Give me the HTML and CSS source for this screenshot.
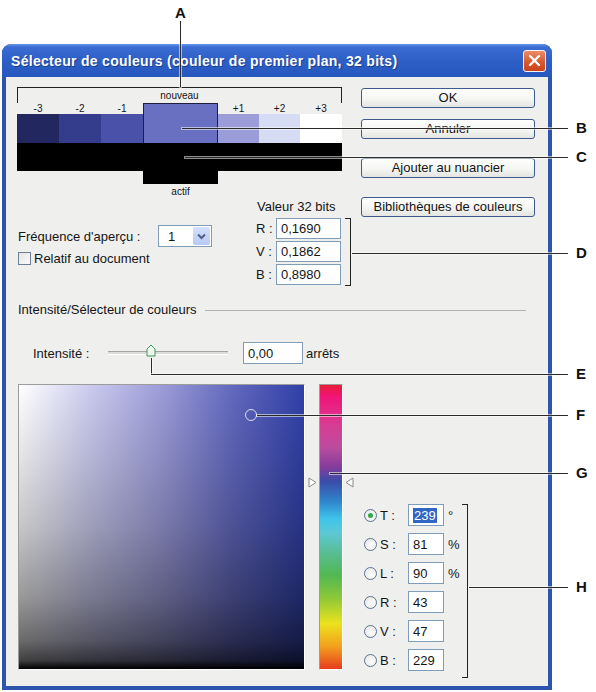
FILE: index.html
```html
<!DOCTYPE html>
<html>

<head>
	<meta charset="utf-8">
	<title>Sélecteur de couleurs</title>
	<link rel="stylesheet" href="styles.css">
</head>

<body>
	<div class="page">
		<div class="window">
			<div class="titlebar">
				<span class="title">Sélecteur de couleurs (couleur de premier plan, 32 bits)</span>
				<span class="close-btn">
					<svg width="13" height="13" viewBox="0 0 13 13"><path d="M2 2 L11 11 M11 2 L2 11" stroke="#fff" stroke-width="2.4" stroke-linecap="round"/></svg>
				</span>
			</div>

			<div class="client">
				<div class="top">
					<div class="left-col">
						<!-- new / active swatches -->
						<div class="swatch-panel">
							<div class="bracket">nouveau</div>
							<div class="swatches">
								<span class="step c1">-3</span>
								<span class="step c2">-2</span>
								<span class="step c3">-1</span>
								<span class="step c5">+1</span>
								<span class="step c6">+2</span>
								<span class="step c7">+3</span>

								<span class="new-swatch"></span>
								<span class="sw c1 m3"></span>
								<span class="sw c2 m2"></span>
								<span class="sw c3 m1"></span>
								<span class="sw c5 p1"></span>
								<span class="sw c6 p2"></span>
								<span class="sw c7 p3"></span>

								<span class="active-row"></span>
								<span class="active-ext"></span>
								<span class="active-label">actif</span>
							</div>
						</div>

						<div class="settings">
							<div class="freq">
								<div class="freq-row">
									<span class="freq-label">Fréquence d'aperçu :</span>
									<span class="select">
										<span class="select-value">1</span>
										<span class="select-arrow">
											<svg width="9" height="7" viewBox="0 0 9 7"><path d="M1 1.5 L4.5 5 L8 1.5" fill="none" stroke="#4d6185" stroke-width="2"/></svg>
										</span>
									</span>
								</div>
								<div class="check-row">
									<span class="checkbox"></span>
									<span>Relatif au document</span>
								</div>
							</div>

							<div class="values">
								<div class="values-title">Valeur 32 bits</div>
								<div class="values-body">
									<div class="values-grid">
										<span class="vlabel">R :</span><span class="box">0,1690</span>
										<span class="vlabel">V :</span><span class="box">0,1862</span>
										<span class="vlabel">B :</span><span class="box">0,8980</span>
									</div>
									<div class="bracket-d"></div>
								</div>
							</div>
						</div>
					</div>

					<div class="buttons">
						<div class="btn">OK</div>
						<div class="btn btn-cancel">Annuler</div>
						<div class="btn btn-gap">Ajouter au nuancier</div>
						<div class="btn btn-gap">Bibliothèques de couleurs</div>
					</div>
				</div>

				<div class="section-head">Intensité/Sélecteur de couleurs</div>

				<div class="intensity">
					<span class="int-label">Intensité :</span>
					<span class="track">
						<svg class="thumb" width="10" height="13" viewBox="0 0 10 13"><path d="M1 5 L5 1 L9 5 L9 12 L1 12 Z" fill="#eef6ee" stroke="#3c9a4c" stroke-width="1"/></svg>
					</span>
					<span class="box num-box">0,00</span>
					<span class="unit-text">arrêts</span>
				</div>

				<div class="picker">
					<div class="field">
						<span class="marker"></span>
					</div>
					<div class="hue-wrap">
						<svg class="tri tri-left" width="9" height="11" viewBox="0 0 9 11"><path d="M1 1 L8 5.5 L1 10 Z" fill="#fff" stroke="#8a8a8a"/></svg>
						<div class="hue-bar"></div>
						<svg class="tri tri-right" width="9" height="11" viewBox="0 0 9 11"><path d="M8 1 L1 5.5 L8 10 Z" fill="#fff" stroke="#8a8a8a"/></svg>
					</div>
					<div class="hsb">
						<div class="hsb-rows">
							<div class="hsb-row"><span class="radio on"></span><span class="hlabel">T :</span><span class="box hbox"><span class="sel">239</span></span><span class="hunit">°</span></div>
							<div class="hsb-row"><span class="radio"></span><span class="hlabel">S :</span><span class="box hbox">81</span><span class="hunit">%</span></div>
							<div class="hsb-row"><span class="radio"></span><span class="hlabel">L :</span><span class="box hbox">90</span><span class="hunit">%</span></div>
							<div class="hsb-row rgb-first"><span class="radio"></span><span class="hlabel">R :</span><span class="box hbox">43</span><span class="hunit"></span></div>
							<div class="hsb-row"><span class="radio"></span><span class="hlabel">V :</span><span class="box hbox">47</span><span class="hunit"></span></div>
							<div class="hsb-row"><span class="radio"></span><span class="hlabel">B :</span><span class="box hbox">229</span><span class="hunit"></span></div>
						</div>
						<div class="bracket-h"></div>
					</div>
				</div>
			</div>
		</div>

		<!-- callout lines and letters -->
		<span class="callout line-a"></span>
		<span class="callout line-b"></span>
		<span class="callout line-c"></span>
		<span class="callout line-d"></span>
		<span class="callout line-e1"></span>
		<span class="callout line-e2"></span>
		<span class="callout line-f"></span>
		<span class="callout line-g"></span>
		<span class="callout line-h"></span>

		<span class="tag tag-a">A</span>
		<span class="tag tag-b">B</span>
		<span class="tag tag-c">C</span>
		<span class="tag tag-d">D</span>
		<span class="tag tag-e">E</span>
		<span class="tag tag-f">F</span>
		<span class="tag tag-g">G</span>
		<span class="tag tag-h">H</span>
	</div>
</body>

</html>
```

FILE: styles.css
```css
body {
    margin: 0;
    background: #fff;
    font-family: "Liberation Sans", Arial, sans-serif;
    font-size: 13px;
    color: #151515;
}

.page {
    position: relative;
    width: 596px;
    height: 692px;
    overflow: hidden;
}

/* window frame */
.window {
    margin: 44px 0 0 2px;
    width: 550px;
    height: 646px;
    background: #2d55ad;
    border-radius: 9px 9px 0 0;
    display: flex;
    flex-direction: column;
}

.titlebar {
    flex: none;
    height: 33px;
    display: flex;
    align-items: center;
    padding: 0 6px 0 9px;
    border-radius: 9px 9px 0 0;
    background: linear-gradient(#6a96ea 0, #3a6cd2 3px, #2d5fc8 50%, #2657bf 100%);
}

.title {
    color: #fff;
    font-weight: bold;
    font-size: 14px;
    letter-spacing: 0.3px;
    text-shadow: 1px 1px 0 #1b3f8e;
}

.close-btn {
    margin-left: auto;
    width: 21px;
    height: 20px;
    border: 1px solid #f4f4f4;
    border-radius: 3px;
    background: linear-gradient(#ee8c68, #d9592f 55%, #c9431d);
    display: flex;
    align-items: center;
    justify-content: center;
}

.client {
    flex: 1;
    margin: 0 4px 4px;
    padding: 10px 13px 0 11px;
    background: #efefed;
}

/* top area */
.top {
    display: flex;
}

.left-col {
    width: 335px;
}

.swatch-panel {
    width: 325px;
}

.bracket {
    height: 16px;
    box-sizing: border-box;
    border: 1px solid #222;
    border-bottom: none;
    text-align: center;
    font-size: 10px;
    line-height: 16px;
}

.swatches {
    display: grid;
    grid-template-columns: 42px 42px 42px 75px 41px 41px 42px;
    grid-template-rows: 11px 29px 28px 13px 16px;
}

.step {
    grid-row: 1;
    font-size: 10px;
    line-height: 11px;
    text-align: center;
}

.c1 { grid-column: 1; }
.c2 { grid-column: 2; }
.c3 { grid-column: 3; }
.c5 { grid-column: 5; }
.c6 { grid-column: 6; }
.c7 { grid-column: 7; }

.sw { grid-row: 2; }
.m3 { background: #23275f; }
.m2 { background: #343c8c; }
.m1 { background: #4a51a9; }
.p1 { background: #9a9dd7; }
.p2 { background: #d5dcf3; }
.p3 { background: #fff; }

.new-swatch {
    grid-column: 4;
    grid-row: 1 / 3;
    background: #6970c1;
    border: 1px solid #1d1f3c;
    border-bottom: none;
}

.active-row {
    grid-column: 1 / 8;
    grid-row: 3;
    background: #000;
}

.active-ext {
    grid-column: 4;
    grid-row: 4;
    background: #000;
}

.active-label {
    grid-column: 4;
    grid-row: 5;
    text-align: center;
    font-size: 10px;
    line-height: 16px;
}

/* settings under the swatches */
.settings {
    display: flex;
}

.freq {
    width: 238px;
    padding: 25px 0 0 1px;
}

.freq-row {
    display: flex;
    align-items: center;
    height: 22px;
}

.freq-label {
    width: 140px;
}

.select {
    width: 54px;
    height: 22px;
    box-sizing: border-box;
    border: 1px solid #7f9db9;
    background: #fff;
    display: flex;
    align-items: center;
}

.select-value {
    flex: 1;
    padding-left: 9px;
}

.select-arrow {
    width: 17px;
    height: 18px;
    margin-right: 1px;
    border-radius: 2px;
    background: linear-gradient(#d4e0fb, #b7c9f3);
    display: flex;
    align-items: center;
    justify-content: center;
}

.check-row {
    display: flex;
    align-items: center;
    margin-top: 4px;
    height: 14px;
}

.checkbox {
    width: 13px;
    height: 13px;
    box-sizing: border-box;
    border: 1px solid #6d7f98;
    background: linear-gradient(135deg, #e4e4e0, #fbfbfb);
    margin-right: 3px;
}

.values-title {
    line-height: 14px;
    padding-left: 1px;
}

.values-body {
    display: flex;
    margin-top: 4px;
}

.values-grid {
    display: grid;
    grid-template-columns: 20px 65px;
    grid-auto-rows: 21px;
    row-gap: 2px;
    align-items: center;
}

.box {
    box-sizing: border-box;
    border: 1px solid #7f9db9;
    background: #fff;
    padding-left: 4px;
    height: 100%;
    display: flex;
    align-items: center;
}

.bracket-d {
    margin-left: 4px;
    width: 6px;
    height: 68px;
    box-sizing: border-box;
    border: 1px solid #222;
    border-left: none;
}

/* buttons */
.buttons {
    margin: 1px 0 0 9px;
    width: 174px;
}

.btn {
    height: 20px;
    box-sizing: border-box;
    border: 1px solid #3e5b8e;
    border-radius: 3px;
    background: linear-gradient(#ffffff, #f5f5f3 55%, #e4e4e0);
    text-align: center;
    line-height: 18px;
}

.btn-cancel { margin-top: 11px; }
.btn-gap { margin-top: 19px; }

/* intensity */
.section-head {
    margin: 16px 9px 0 0;
    padding-left: 1px;
    line-height: 16px;
    display: flex;
    align-items: center;
}

.section-head::after {
    content: "";
    flex: 1;
    margin-left: 8px;
    border-top: 1px solid #b2b2b2;
}

.intensity {
    margin-top: 24px;
    height: 22px;
    display: flex;
    align-items: center;
    padding-left: 16px;
}

.int-label {
    width: 75px;
}

.track {
    position: relative;
    width: 120px;
    height: 4px;
    box-sizing: border-box;
    border-top: 1px solid #a4a4a4;
    border-bottom: 1px solid #fff;
    background: #dcdcdc;
}

.thumb {
    position: absolute;
    left: 38px;
    top: -8px;
}

.num-box {
    margin-left: 15px;
    width: 60px;
}

.unit-text {
    margin-left: 3px;
}

/* picker */
.picker {
    margin-top: 20px;
    height: 286px;
    display: flex;
}

.field {
    position: relative;
    margin-left: 1px;
    width: 287px;
    height: 286px;
    box-sizing: border-box;
    border: 1px solid #fff;
    border-top-color: #9c9c9c;
    border-left-color: #9c9c9c;
    background:
        linear-gradient(to bottom, rgba(0,0,0,0) 0%, rgba(0,0,0,0.1) 25%, rgba(0,0,0,0.22) 50%,
            rgba(0,0,0,0.4) 75%, rgba(0,0,0,0.58) 90%, rgba(0,0,0,0.75) 97%, #000 100%),
        linear-gradient(to right, #fff 0%, #cacaee 25%, #9c9cd8 50%, #6268be 75%, #3040a8 100%);
}

.marker {
    position: absolute;
    left: 226px;
    top: 24px;
    width: 10px;
    height: 10px;
    border: 1.5px solid #dcdcec;
    border-radius: 50%;
}

.hue-wrap {
    position: relative;
    margin-left: 3px;
    width: 45px;
}

.hue-bar {
    margin-left: 11px;
    width: 24px;
    height: 286px;
    box-sizing: border-box;
    border: 1px solid #fff;
    border-top-color: #9c9c9c;
    border-left-color: #9c9c9c;
    background: linear-gradient(to bottom,
        #e81c36 0%, #f01478 4%, #d83c94 14%, #bb4c9e 22%, #833c9c 29%,
        #3a4ea8 34%, #2f84cc 41%, #3ec4ea 47%, #5cc8d6 52%, #58bc8c 60%,
        #52b852 67%, #8cc838 75%, #ece21e 84%, #f4a01e 92%, #e63c1e 100%);
}

.tri {
    position: absolute;
    top: 93px;
}

.tri-left { left: 0; }
.tri-right { left: 37px; }

.hsb {
    display: flex;
    margin: 120px 0 0 11px;
}

.hsb-row {
    display: flex;
    align-items: center;
    height: 22px;
    margin-bottom: 7px;
}

.rgb-first {
    margin-top: 4px;
}

.radio {
    width: 13px;
    height: 13px;
    box-sizing: border-box;
    border: 1px solid #5b7393;
    border-radius: 50%;
    background: radial-gradient(circle at 60% 60%, #fff, #e2e2de);
    margin-right: 3px;
    display: flex;
    align-items: center;
    justify-content: center;
}

.radio.on::after {
    content: "";
    width: 5px;
    height: 5px;
    border-radius: 50%;
    background: #33a845;
}

.hlabel {
    width: 28px;
}

.hbox {
    width: 36px;
}

.sel {
    background: #3266c4;
    color: #fff;
    padding: 0 1px;
}

.hunit {
    width: 12px;
    margin-left: 4px;
}

.bracket-h {
    margin-left: 2px;
    width: 6px;
    height: 174px;
    box-sizing: border-box;
    border: 1px solid #222;
    border-left: none;
}

/* callouts, drawn over the dialog */
.callout {
    position: absolute;
    background: #2a2a2a;
    box-shadow: 0 0 0 1px rgba(255, 255, 255, 0.55);
}

.line-a { left: 180px; top: 21px; width: 1px; height: 66px; }
.line-b { left: 182px; top: 128px; width: 386px; height: 1px; }
.line-c { left: 185px; top: 157px; width: 383px; height: 1px; }
.line-d { left: 352px; top: 253px; width: 216px; height: 1px; }
.line-e1 { left: 151px; top: 358px; width: 1px; height: 16px; }
.line-e2 { left: 151px; top: 374px; width: 417px; height: 1px; }
.line-f { left: 257px; top: 415px; width: 311px; height: 1px; }
.line-g { left: 330px; top: 473px; width: 238px; height: 1px; }
.line-h { left: 469px; top: 587px; width: 99px; height: 1px; }

.tag {
    position: absolute;
    font-weight: bold;
    font-size: 15px;
    line-height: 16px;
    color: #111;
    left: 576px;
}

.tag-a { left: 175px; top: 5px; }
.tag-b { top: 120px; }
.tag-c { top: 149px; }
.tag-d { top: 245px; }
.tag-e { top: 366px; }
.tag-f { top: 407px; }
.tag-g { top: 465px; }
.tag-h { top: 579px; }
```
